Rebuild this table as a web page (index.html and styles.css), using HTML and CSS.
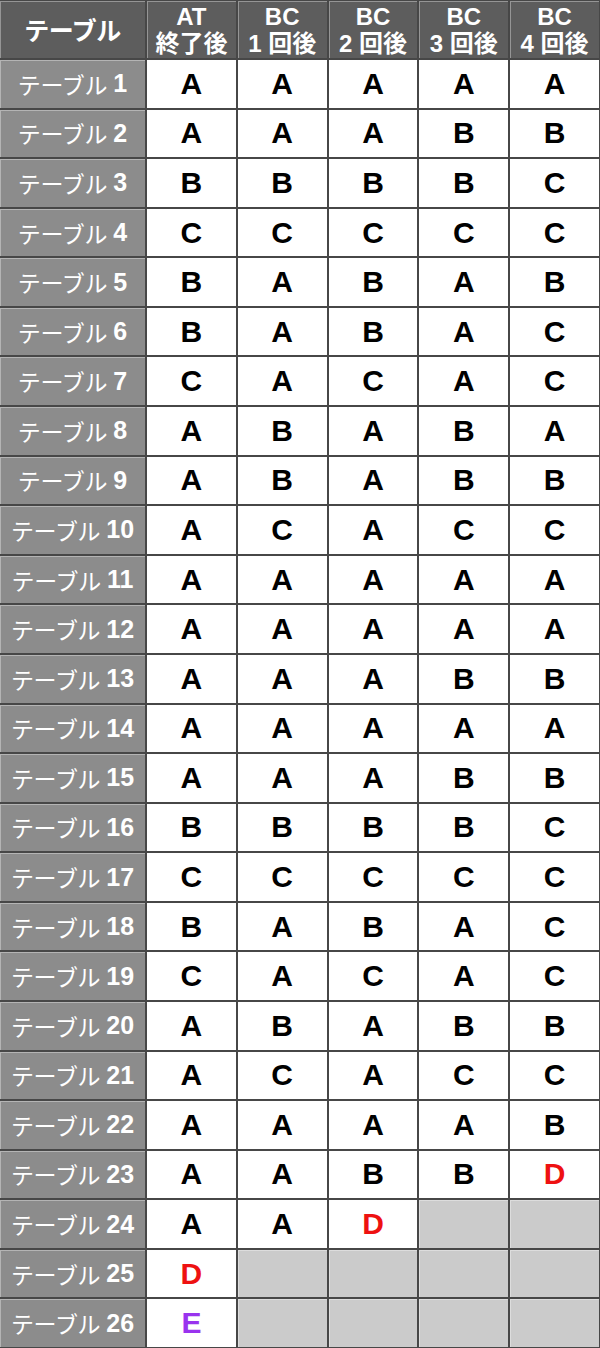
FILE: index.html
```html
<!DOCTYPE html>
<html lang="ja">
<head>
<meta charset="utf-8">
<link rel="stylesheet" href="styles.css">
</head>
<body>
<div class="grid" id="grid"></div>
<script>
const data = [
"AAAAA","AAABB","BBBBC","CCCCC","BABAB","BABAC","CACAC","ABABA","ABABB","ACACC",
"AAAAA","AAAAA","AAABB","AAAAA","AAABB","BBBBC","CCCCC","BABAC","CACAC","ABABB",
"ACACC","AAAAB","AABBD","AAD--","D----","E----"];
const g = document.getElementById('grid');
const heads = [['テーブル'],['AT','終了後'],['BC','1 回後'],['BC','2 回後'],['BC','3 回後'],['BC','4 回後']];
heads.forEach((h,i)=>{
  const d=document.createElement('div');
  d.className = 'cell head' + (i===0?' head-first':'');
  d.innerHTML = h.map(t=>'<span>'+t+'</span>').join('');
  g.appendChild(d);
});
data.forEach((row,r)=>{
  const l=document.createElement('div');
  l.className='cell label';
  l.innerHTML='<span class="jp">テーブル</span><span class="num">'+(r+1)+'</span>';
  g.appendChild(l);
  for(const ch of row){
    const c=document.createElement('div');
    if(ch==='-'){c.className='cell empty';}
    else{
      c.className='cell val'+(ch==='D'?' red':ch==='E'?' purple':'');
      c.textContent=ch;
    }
    g.appendChild(c);
  }
});
</script>
</body>
</html>
```
FILE: styles.css
```css
html, body { margin: 0; padding: 0; }
body { width: 600px; height: 1348px; overflow: hidden; background: #fff; }
.grid {
  display: grid;
  grid-template-columns: 145px repeat(5, 1fr);
  grid-template-rows: 57px repeat(26, 1fr);
  gap: 2px;
  background: #474747;
  height: 1348px;
  box-sizing: border-box;
  padding: 1px 1px 1px 0;
}
.cell {
  display: flex;
  align-items: center;
  justify-content: center;
  box-shadow: inset 1px 1px 0 rgba(255,255,255,0.35);
}
.head {
  background: #5d5d5d;
  color: #fff;
  flex-direction: column;
  font-family: "Liberation Sans", "Noto Sans CJK JP", sans-serif;
  font-weight: bold;
  font-size: 24px;
  line-height: 27px;
}
.head-first span { font-family: "Noto Sans CJK JP", sans-serif; font-size: 25px; letter-spacing: -0.5px; }
.label {
  background: #8c8c8c;
  color: #fff;
  font-family: "Noto Sans CJK JP", sans-serif;
  font-size: 23px;
}
.label .jp { font-weight: 400; letter-spacing: -0.3px; }
.label .num { font-family: "Liberation Sans", sans-serif; font-weight: bold; font-size: 25px; margin-left: 6px; }
.val {
  background: #fff;
  font-family: "Liberation Sans", sans-serif;
  font-weight: bold;
  font-size: 30px;
  color: #000;
  box-shadow: none;
}
.red { color: #ee1111; }
.purple { color: #9933ee; }
.empty { background: #cbcbcb; }
```
